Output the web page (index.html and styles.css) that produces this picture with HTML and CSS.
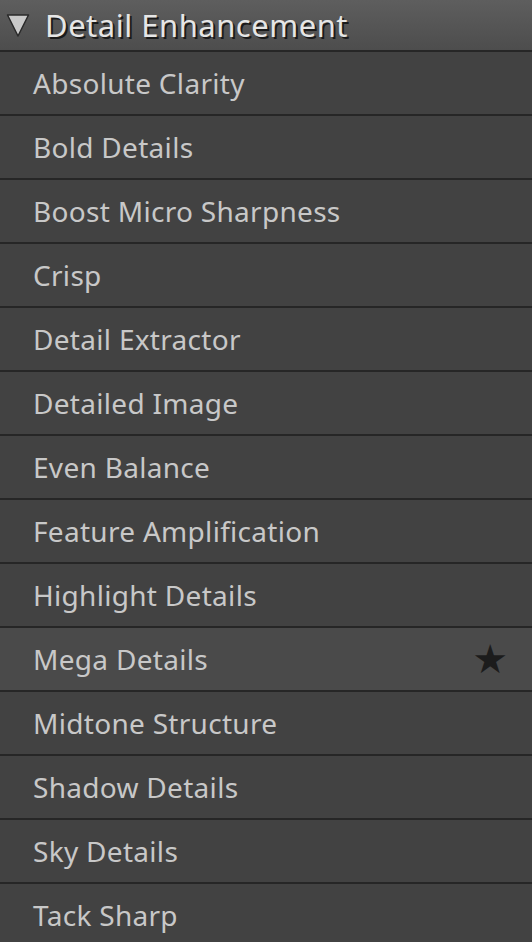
FILE: index.html
```html
<!doctype html>
<html lang="en">
  <head>
    <meta charset="UTF-8" />
    <meta name="viewport" content="width=device-width, initial-scale=1.0" />
    <title>Detail Enhancement</title>
    <link rel="stylesheet" href="styles.css">
  </head>
  <body>
    <div class="group">
      <div class="group-head">
        <svg class="caret" width="24" height="26" viewBox="0 0 24 26">
          <polygon points="1.5,3 22.5,3 12,24" fill="#c9c9c9" stroke="#2a2a2a" stroke-width="1.5" stroke-linejoin="round" />
        </svg>
        <span class="group-title">Detail Enhancement</span>
      </div>
      <ul class="presets">
        <li>Absolute Clarity</li>
        <li>Bold Details</li>
        <li>Boost Micro Sharpness</li>
        <li>Crisp</li>
        <li>Detail Extractor</li>
        <li>Detailed Image</li>
        <li>Even Balance</li>
        <li>Feature Amplification</li>
        <li>Highlight Details</li>
        <li class="selected">Mega Details <span class="fav">&#9733;</span></li>
        <li>Midtone Structure</li>
        <li>Shadow Details</li>
        <li>Sky Details</li>
        <li>Tack Sharp</li>
      </ul>
    </div>
  </body>
</html>
```

FILE: styles.css
```css
html,
body {
  margin: 0;
  padding: 0;
  background: #424242;
  overflow: hidden;
}
.group {
  font-family: "Noto Sans", sans-serif;
}
.group-head {
  height: 50px;
  display: flex;
  align-items: center;
  padding-left: 6px;
  background: linear-gradient(#5e5e5e, #4d4d4d);
  border-bottom: 2px solid #262626;
}
.caret {
  margin-right: 15px;
}
.group-title {
  font-size: 31px;
  letter-spacing: 0.5px;
  color: #e6e6e6;
  text-shadow: 2px 2px 0 #1a1a1a;
}
.presets {
  list-style: none;
  margin: 0;
  padding: 0;
}
.presets li {
  height: 62px;
  display: flex;
  align-items: center;
  padding: 0 24px 0 33px;
  border-bottom: 2px solid #262626;
  background: #424242;
  color: #c8c8c8;
  font-size: 28px;
  letter-spacing: 0.3px;
}
.presets li.selected {
  background: #4a4a4a;
}
.fav {
  margin-left: auto;
  color: #1c1c1c;
  font-size: 40px;
  font-family: "DejaVu Sans", sans-serif;
  letter-spacing: 0;
}
```
